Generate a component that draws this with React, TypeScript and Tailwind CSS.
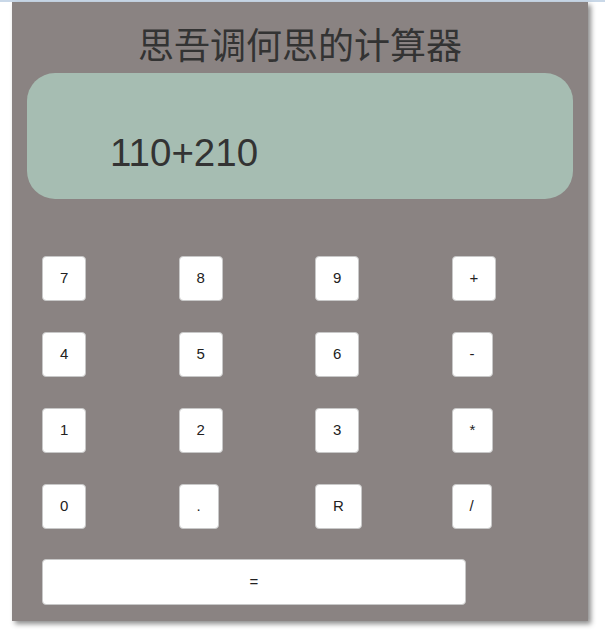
import { useState } from "react";

const keys = ["7", "8", "9", "+", "4", "5", "6", "-", "1", "2", "3", "*", "0", ".", "R", "/"];

export default function App() {
  const [expr, setExpr] = useState("110+210");

  const press = (k: string) => {
    if (k === "R") {
      setExpr("");
    } else {
      setExpr(expr + k);
    }
  };

  const calc = () => {
    try {
      // eslint-disable-next-line no-new-func
      const result = Function(`return (${expr})`)();
      setExpr(String(result));
    } catch {
      setExpr("Error");
    }
  };

  return (
    <div className="min-h-screen bg-white" style={{ fontFamily: '"Liberation Sans", Arial, sans-serif' }}>
      <div className="h-[2px] bg-[#c9d8e8]"></div>
      <div className="ml-[12px] w-[576px] h-[619px] bg-[#8a8382] shadow-[3px_3px_5px_rgba(0,0,0,0.45)]">
        <h1
          className="pt-[20px] h-[71px] text-center text-[36px] leading-[42px] text-[#333]"
          style={{ fontFamily: '"Noto Sans CJK SC", "Liberation Sans", sans-serif' }}
        >
          思吾调何思的计算器
        </h1>
        <div className="mx-[15px] h-[126px] rounded-[28px] bg-[#a6bdb2] flex items-center pl-[83px] pt-[34px] text-[38.5px] text-[#333]">
          {expr}
        </div>
        <div className="grid grid-cols-4 pl-[30px] pt-[57px] gap-y-[31px]">
          {keys.map((k) => (
            <div key={k}>
              <button
                onClick={() => press(k)}
                className="h-[45px] px-[17px] border border-[#c8c8c8] rounded-[4px] bg-white text-[15px] text-[#222]"
              >
                {k}
              </button>
            </div>
          ))}
        </div>
        <div className="pl-[30px] pt-[30px]">
          <button
            onClick={calc}
            className="w-[424px] h-[46px] border border-[#c8c8c8] rounded-[4px] bg-white text-[15px] text-[#222]"
          >
            =
          </button>
        </div>
      </div>
    </div>
  );
}
